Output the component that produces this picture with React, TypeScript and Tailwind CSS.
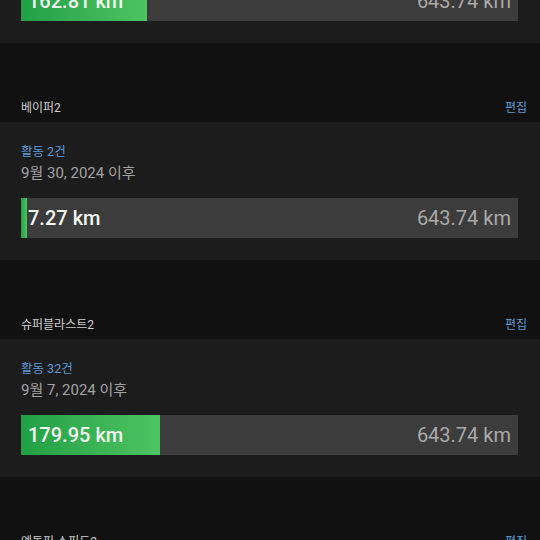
const shoes = [
  { name: "페가수스41", count: 21, since: "8월 1, 2024 이후", distance: 162.81 },
  { name: "베이퍼2", count: 2, since: "9월 30, 2024 이후", distance: 7.27 },
  { name: "슈퍼블라스트2", count: 32, since: "9월 7, 2024 이후", distance: 179.95 },
  { name: "엔돌핀 스피드2", count: 12, since: "10월 2, 2024 이후", distance: 54.1 },
];

const goal = 643.74;

const font = { fontFamily: "Roboto, 'Noto Sans CJK KR', sans-serif" };

const ShoeCard = ({
  count,
  since,
  distance,
}: {
  count: number;
  since: string;
  distance: number;
}) => {
  const pct = Math.min(100, (distance / goal) * 100);
  return (
    <div className="bg-[#1c1c1c] pt-[21px] pb-[22px] pl-[21px] pr-[22px]">
      <div className="text-[12.5px] leading-[18px] text-[#5b9bd8]">활동 {count}건</div>
      <div className="text-[15px] leading-[24px] text-[#a3a3a3]">{since}</div>
      <div className="relative mt-[13px] flex h-[40px] items-center justify-between bg-[#3c3c3c]">
        <div
          className="absolute inset-y-0 left-0 bg-linear-to-r from-[#20a045] to-[#4dc463]"
          style={{ width: `${pct}%` }}
        />
        <span className="relative pl-[7px] text-[20px] font-medium text-[#f3f7f2]">
          {distance.toFixed(2)} km
        </span>
        <span className="relative pr-[7px] text-[20px] text-[#a9a9a9]">
          {goal.toFixed(2)} km
        </span>
      </div>
    </div>
  );
};

export default function App() {
  return (
    <div className="h-[540px] w-[540px] overflow-hidden bg-[#111111]" style={font}>
      <div className="-mt-[95px] flex flex-col">
        {shoes.map((shoe, i) => (
          <div key={shoe.name}>
            {i > 0 && (
              <div className="flex h-[79px] items-end justify-between pb-[6px] pl-[21px] pr-[13px]">
                <span className="text-[12px] leading-[16px] text-[#cfcfcf]">{shoe.name}</span>
                <span className="text-[12px] leading-[16px] text-[#5b9bd8]">편집</span>
              </div>
            )}
            <ShoeCard count={shoe.count} since={shoe.since} distance={shoe.distance} />
          </div>
        ))}
      </div>
    </div>
  );
}
